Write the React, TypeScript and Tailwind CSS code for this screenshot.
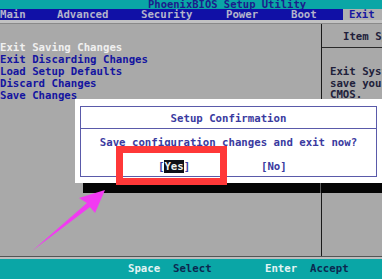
const MENU = [
  { label: 'Main', w: 'w-[57px]' },
  { label: 'Advanced', w: 'w-[84px]' },
  { label: 'Security', w: 'w-[85px]' },
  { label: 'Power', w: 'w-[65px]' },
  { label: 'Boot', w: 'w-[52px]' },
];

const ITEMS = [
  'Exit Saving Changes',
  'Exit Discarding Changes',
  'Load Setup Defaults',
  'Discard Changes',
  'Save Changes',
];

export default function App() {
  return (
    <div className="relative flex h-[279px] w-[382px] flex-col overflow-hidden bg-[#a9a9a9] font-['DejaVu_Sans_Mono',monospace] text-[10.7px] font-bold">
      {/* Title bar */}
      <div className="h-[9px] shrink-0 overflow-hidden bg-[#0aa6a6] pl-[148px] text-[10.5px] leading-[9px] text-[#1c1c8c]">
        PhoenixBIOS Setup Utility
      </div>

      {/* Menu bar */}
      <div className="flex h-[11px] shrink-0 items-center bg-[#1010a6] leading-[11px] text-[#b4b4cc]">
        {MENU.map((m) => (
          <div key={m.label} className={m.w}>
            {m.label}
          </div>
        ))}
        <div className="h-full flex-1 bg-[#b0b0b0] pl-[6px] text-[#1818a0]">Exit</div>
      </div>
      <div className="h-[4px] shrink-0 border-b border-[#8a8a8a] bg-[#c2c2c2]" />

      {/* Main area */}
      <div className="flex min-h-0 flex-1">
        <div className="w-[321px] pt-[18px] leading-[12px] text-[#1414a0]">
          {ITEMS.map((t, i) => (
            <div key={t} className={i === 0 ? 'text-[#f0f0f0]' : ''}>
              {t}
            </div>
          ))}
        </div>
        <div className="flex flex-1 flex-col overflow-hidden whitespace-nowrap border-l border-[#1a1a1a] text-[#20203a]">
          <div className="flex h-[24px] items-center border-b border-[#2a2a2a] pl-[21px] pt-[4px]">
            Item Specific Help
          </div>
          <div className="pl-[8px] pt-[18px] leading-[11.5px]">
            <div>Exit System Setup and</div>
            <div>save your changes to</div>
            <div>CMOS.</div>
          </div>
        </div>
      </div>

      {/* Footer */}
      <div className="h-[3px] shrink-0 border-t border-[#555] bg-[#bdbdbd]" />
      <div className="flex h-[20px] shrink-0 items-center bg-[#0aa6a6] pt-[1px] text-[#e4f4f4]">
        <span className="ml-[128px] w-[45px]">Space</span>
        <span className="w-[92px] text-[#0c2850]">Select</span>
        <span className="w-[45px]">Enter</span>
        <span className="text-[#0c2850]">Accept</span>
      </div>

      {/* Dialog */}
      <div className="absolute left-[75px] top-[99px] h-[84px] w-[307px] bg-white pb-[6px] pl-[5px] pr-[5px] pt-[7px] text-[#3a3aa0]">
        <div className="flex h-full flex-col border border-[#5a5aaa]">
          <div className="flex h-[22px] items-center justify-center border-b border-[#5a5aaa] pt-[3px]">
            Setup Confirmation
          </div>
          <div className="pt-[8px] text-center leading-[12px]">
            Save configuration changes and exit now?
          </div>
          <div className="flex pt-[12px] leading-[12px]">
            <span className="ml-[77px] w-[103px]">
              [<span className="bg-[#101018] text-[#f0f0f0]">Yes</span>]
            </span>
            <span>[No]</span>
          </div>
        </div>
      </div>

      {/* Dialog shadow */}
      <div className="absolute left-[83px] top-[183px] h-[10px] w-[299px] bg-[#050505]">
        <div className="ml-[237px] h-full w-px bg-[#5a5a5a]" />
      </div>

      {/* Annotation: red box */}
      <div className="absolute left-[116px] top-[146px] h-[39px] w-[111px] border-[7px] border-[#ff3838]" />

      {/* Annotation: arrow */}
      <svg className="pointer-events-none absolute left-0 top-0" width="382" height="279" viewBox="0 0 382 279">
        <polygon
          points="105,190 79,198 87,203 32,251 90,207 95,213"
          fill="#f23af2"
        />
      </svg>
    </div>
  );
}
